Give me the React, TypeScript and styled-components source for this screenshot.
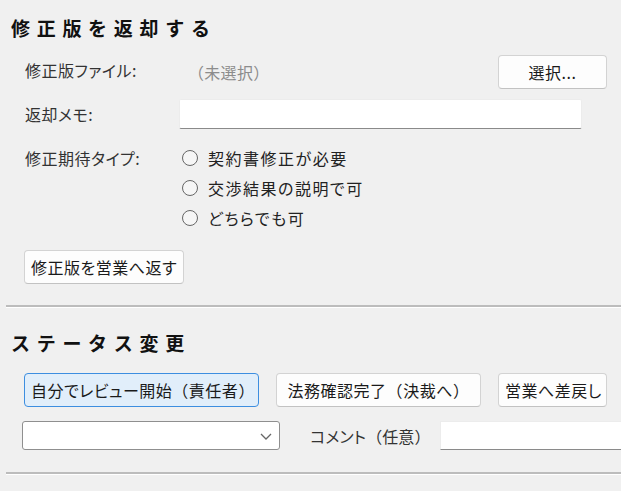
import React from 'react';
import styled, { createGlobalStyle } from 'styled-components';

const GlobalStyle = createGlobalStyle`
  html, body {
    margin: 0;
    padding: 0;
    background: #f0f0f0;
  }
  body {
    font-family: "Noto Sans CJK JP", "Noto Sans", sans-serif;
    font-size: 16px;
    color: #333;
    font-feature-settings: "palt";
  }
`;

const Page = styled.div`
  width: 621px;
  height: 491px;
  overflow: hidden;
  display: flex;
  flex-direction: column;
  padding-top: 15px;
  box-sizing: border-box;
`;

const SectionTitle = styled.h2<{ $gap: number }>`
  margin: 0 0 ${p => p.$gap}px 11px;
  height: 26px;
  line-height: 26px;
  font-size: 19px;
  font-weight: 700;
  letter-spacing: 6.7px;
  color: #111;
  white-space: nowrap;
  font-feature-settings: normal;
`;

// full-width brackets keep their full advance, as in the Windows UI font
const Paren = styled.span`
  font-feature-settings: normal;
`;

const Form = styled.div`
  display: grid;
  grid-template-columns: 154px 1fr;
  align-items: center;
  row-gap: 10px;
  padding: 0 14px 0 25px;
`;

const Label = styled.div<{ $top?: number }>`
  align-self: start;
  margin-top: ${p => p.$top ?? 0}px;
  line-height: 30px;
  letter-spacing: 0.5px;
  white-space: nowrap;
`;

const FieldRow = styled.div`
  display: flex;
  align-items: center;
  justify-content: space-between;
`;

const Placeholder = styled.span`
  padding-left: 9px;
  color: #8c8c8c;
  letter-spacing: 0.3px;
`;

const Button = styled.button<{ $primary?: boolean; $width?: number }>`
  height: 34px;
  width: ${p => (p.$width ? `${p.$width}px` : 'auto')};
  padding: 0 6px;
  box-sizing: border-box;
  font-family: inherit;
  font-size: 16px;
  letter-spacing: 0.5px;
  color: #1a1a1a;
  background: ${p => (p.$primary ? '#e1eefa' : '#fdfdfd')};
  border: ${p => (p.$primary ? '1.5px solid #3d8ee0' : '1px solid #d3d3d3')};
  border-bottom-color: ${p => (p.$primary ? '#3d8ee0' : '#c2c2c2')};
  border-radius: 4px;
  white-space: nowrap;
  font-feature-settings: "palt";
`;

const TextBox = styled.div<{ $right: number }>`
  height: 30px;
  margin-right: ${p => p.$right}px;
  box-sizing: border-box;
  background: #fff;
  border: 1px solid #ececec;
  border-bottom: 1px solid #8a8a8a;
  border-radius: 2px;
`;

const RadioGroup = styled.div`
  display: flex;
  flex-direction: column;
  margin-left: 3px;
  margin-top: 4px;
`;

const RadioRow = styled.label`
  display: flex;
  align-items: center;
  gap: 10px;
  height: 30px;
  letter-spacing: 1.5px;
  color: #222;
`;

const RadioCircle = styled.span`
  width: 16px;
  height: 16px;
  box-sizing: border-box;
  border: 1.5px solid #666;
  border-radius: 50%;
  background: #f6f6f6;
`;

const ActionRow = styled.div<{ $top: number }>`
  display: flex;
  gap: 17px;
  padding-left: 24px;
  margin-top: ${p => p.$top}px;
`;

const Separator = styled.hr<{ $top: number; $bottom?: number }>`
  margin: ${p => p.$top}px 0 ${p => p.$bottom ?? 0}px 6px;
  height: 2px;
  border: 0;
  background: #bcbcbc;
  border-bottom: 1px solid #fff;
`;

const BottomRow = styled.div`
  display: flex;
  align-items: center;
  margin-top: 14px;
  padding-left: 22px;
`;

const Combo = styled.div`
  width: 258px;
  height: 29px;
  box-sizing: border-box;
  display: flex;
  align-items: center;
  justify-content: flex-end;
  padding-right: 6px;
  background: #fff;
  border: 1px solid #8f8f8f;
  border-radius: 3px;
`;

const CommentLabel = styled.span`
  margin-left: 30px;
  width: 130px;
  letter-spacing: 0.1px;
  white-space: nowrap;
`;

const CommentBox = styled.div`
  flex: 1;
  height: 29px;
  margin-right: -10px;
  background: #fff;
  border: 1px solid #ececec;
  border-bottom: 1px solid #8a8a8a;
  box-sizing: border-box;
`;

const radioOptions = ['契約書修正が必要', '交渉結果の説明で可', 'どちらでも可'];

export default function App() {
  return (
    <>
      <GlobalStyle />
      <Page>
        <SectionTitle $gap={14}>修正版を返却する</SectionTitle>
        <Form>
          <Label>修正版ファイル:</Label>
          <FieldRow>
            <Placeholder>
              <Paren>（</Paren>未選択<Paren>）</Paren>
            </Placeholder>
            <Button $width={109}>選択...</Button>
          </FieldRow>

          <Label>返却メモ:</Label>
          <TextBox $right={25} />

          <Label $top={4}>修正期待タイプ:</Label>
          <RadioGroup>
            {radioOptions.map(o => (
              <RadioRow key={o}>
                <RadioCircle />
                {o}
              </RadioRow>
            ))}
          </RadioGroup>
        </Form>

        <ActionRow $top={17}>
          <Button>修正版を営業へ返す</Button>
        </ActionRow>

        <Separator $top={21} $bottom={22} />

        <SectionTitle $gap={17}>ステータス変更</SectionTitle>
        <ActionRow $top={0}>
          <Button $primary $width={235}>
            自分でレビュー開始<Paren>（</Paren>責任者<Paren>）</Paren>
          </Button>
          <Button $width={205}>
            法務確認完了<Paren>（</Paren>決裁へ<Paren>）</Paren>
          </Button>
          <Button $width={109}>営業へ差戻し</Button>
        </ActionRow>

        <BottomRow>
          <Combo>
            <svg width="14" height="10" viewBox="0 0 14 10">
              <polyline points="2,3 7,8 12,3" fill="none" stroke="#666" strokeWidth="1.3" />
            </svg>
          </Combo>
          <CommentLabel>
            コメント<Paren>（</Paren>任意<Paren>）</Paren>
          </CommentLabel>
          <CommentBox />
        </BottomRow>

        <Separator $top={22} />
      </Page>
    </>
  );
}
